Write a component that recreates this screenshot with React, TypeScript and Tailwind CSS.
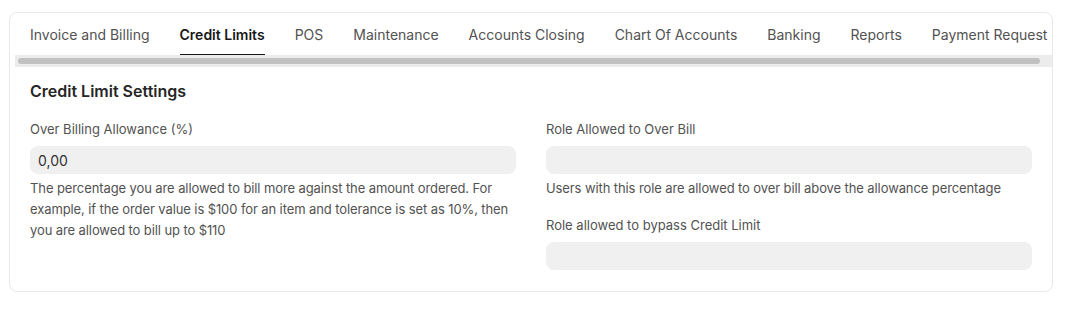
import React from "react";

const tabs = [
  "Invoice and Billing",
  "Credit Limits",
  "POS",
  "Maintenance",
  "Accounts Closing",
  "Chart Of Accounts",
  "Banking",
  "Reports",
  "Payment Request",
];

function Field({ label, value, desc }: { label: string; value?: string; desc?: string }) {
  return (
    <div className="flex flex-col">
      <div className="text-[13px] leading-[20px] text-[#525252] mb-[7px]">{label}</div>
      <div className="h-7 rounded-lg bg-[#f0f0f0] px-2 flex items-center text-[14px] text-[#333333]">
        {value}
      </div>
      {desc && (
        <div className="mt-[4px] text-[13px] leading-[20.8px] tracking-[-0.1px] text-[#525252]">
          {desc}
        </div>
      )}
    </div>
  );
}

export default function App() {
  return (
    <div
      className="w-[1065px] h-[327px] bg-white pt-3 pl-[9px] pr-[12px]"
      style={{ fontFamily: "Inter, 'Noto Sans', sans-serif" }}
    >
      <div className="rounded-lg border border-[#e8e8e8] h-[280px] overflow-hidden">
        <div className="ml-[5px]">
          <div className="flex gap-[30px] pl-[15px] overflow-hidden whitespace-nowrap h-[42px]">
            {tabs.map((t) => {
              const active = t === "Credit Limits";
              return (
                <div
                  key={t}
                  className={
                    "pt-[12px] pb-[8px] text-[14px] leading-[20px] shrink-0 border-b " +
                    (active
                      ? "border-[#171717] text-[#171717] font-semibold"
                      : "border-transparent text-[#525252]")
                  }
                >
                  {t}
                </div>
              );
            })}
          </div>
          <div className="h-[12px] bg-[#ececec] flex items-center pl-[3px] pr-[12px]">
            <div className="h-[6px] w-full rounded-full bg-[#c1c1c1]" />
          </div>
        </div>
        <div className="px-5 pt-3">
          <div className="text-[16px] leading-[24px] font-semibold text-[#262626] mb-4">
            Credit Limit Settings
          </div>
          <div className="grid grid-cols-2 gap-x-[30px]">
            <div>
              <Field
                label="Over Billing Allowance (%)"
                value="0,00"
                desc="The percentage you are allowed to bill more against the amount ordered. For example, if the order value is $100 for an item and tolerance is set as 10%, then you are allowed to bill up to $110"
              />
            </div>
            <div className="flex flex-col gap-[16px]">
              <Field
                label="Role Allowed to Over Bill"
                desc="Users with this role are allowed to over bill above the allowance percentage"
              />
              <Field label="Role allowed to bypass Credit Limit" />
            </div>
          </div>
        </div>
      </div>
    </div>
  );
}
